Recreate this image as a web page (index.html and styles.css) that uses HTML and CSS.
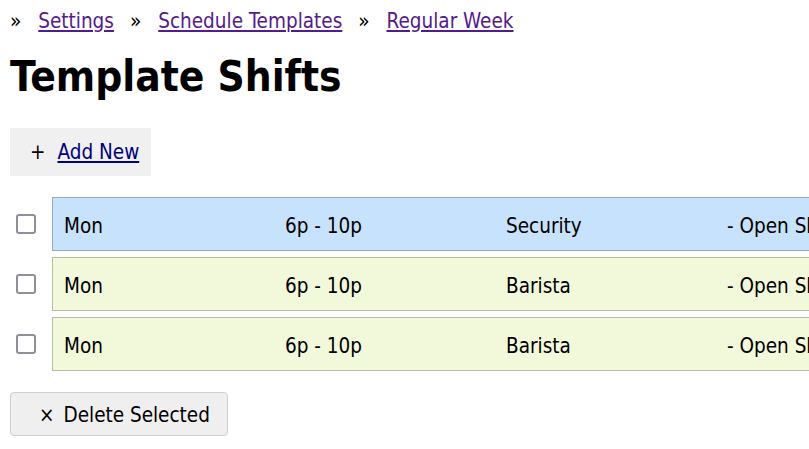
FILE: index.html
```html
<!DOCTYPE html>
<html>
<head>
<meta charset="utf-8">
<link rel="stylesheet" href="styles.css">
</head>
<body>
<nav class="crumbs">
  <span class="sep">»</span><a href="#" class="visited">Settings</a>
  <span class="sep">»</span><a href="#" class="visited">Schedule Templates</a>
  <span class="sep">»</span><a href="#" class="visited">Regular Week</a>
</nav>
<h1 class="title">Template Shifts</h1>
<div class="add">
  <span class="plus">+</span><a href="#" class="add-link">Add New</a>
</div>
<div class="rows">
  <div class="row">
    <span class="check"></span>
    <div class="shift blue">
      <span class="cell">Mon</span><span class="cell">6p - 10p</span><span class="cell">Security</span><span class="cell">- Open Shift</span>
    </div>
  </div>
  <div class="row">
    <span class="check"></span>
    <div class="shift green">
      <span class="cell">Mon</span><span class="cell">6p - 10p</span><span class="cell">Barista</span><span class="cell">- Open Shift</span>
    </div>
  </div>
  <div class="row">
    <span class="check"></span>
    <div class="shift green">
      <span class="cell">Mon</span><span class="cell">6p - 10p</span><span class="cell">Barista</span><span class="cell">- Open Shift</span>
    </div>
  </div>
</div>
<button class="delete"><span class="x">×</span>Delete Selected</button>
</body>
</html>
```

FILE: styles.css
```css
html, body {
  overflow: hidden;
}
body {
  margin: 0;
  padding: 0 10px;
  font-family: "DejaVu Sans Condensed", "DejaVu Sans", Verdana, sans-serif;
  font-size: 20.5px;
  color: #000;
  background: #fff;
}
.crumbs {
  display: flex;
  align-items: baseline;
  height: 42px;
  padding-top: 9px;
  box-sizing: border-box;
  white-space: nowrap;
}
.sep {
  margin-right: 17px;
}
.crumbs a {
  color: #551a8b;
  margin-right: 16px;
}
.title {
  margin: 0;
  font-size: 42px;
  font-weight: bold;
  line-height: 70px;
  height: 86px;
}
.add {
  display: inline-flex;
  align-items: center;
  background: #f0f0f0;
  height: 48px;
  padding: 0 12px 0 20px;
}
.plus {
  margin-right: 12px;
}
.add-link {
  color: #000080;
}
.rows {
  margin-top: 21px;
  display: flex;
  flex-direction: column;
  gap: 6px;
}
.row {
  display: flex;
  align-items: center;
  width: 1100px;
}
.check {
  width: 16px;
  height: 16px;
  border: 2px solid #8f8f9d;
  border-radius: 3px;
  margin: 0 16px 0 6px;
  background: #fff;
  flex: none;
}
.shift {
  display: flex;
  flex: none;
  align-items: center;
  border: 1px solid;
  padding: 3px 0 0 11px;
  box-sizing: border-box;
  height: 54px;
  width: 1000px;
}
.blue {
  background: #c7e2fc;
  border-color: #97a9c5;
}
.green {
  background: #f2f8da;
  border-color: #b9bca1;
}
.cell {
  width: 221px;
  flex: none;
  white-space: nowrap;
}
.delete {
  margin-top: 21px;
  font: inherit;
  color: #000;
  background: #efefef;
  border: 1px solid #cdcdcd;
  border-radius: 4px;
  height: 44px;
  width: 218px;
  padding: 2px 0 0 28px;
  text-align: left;
}
.x {
  margin-right: 9px;
}
```
